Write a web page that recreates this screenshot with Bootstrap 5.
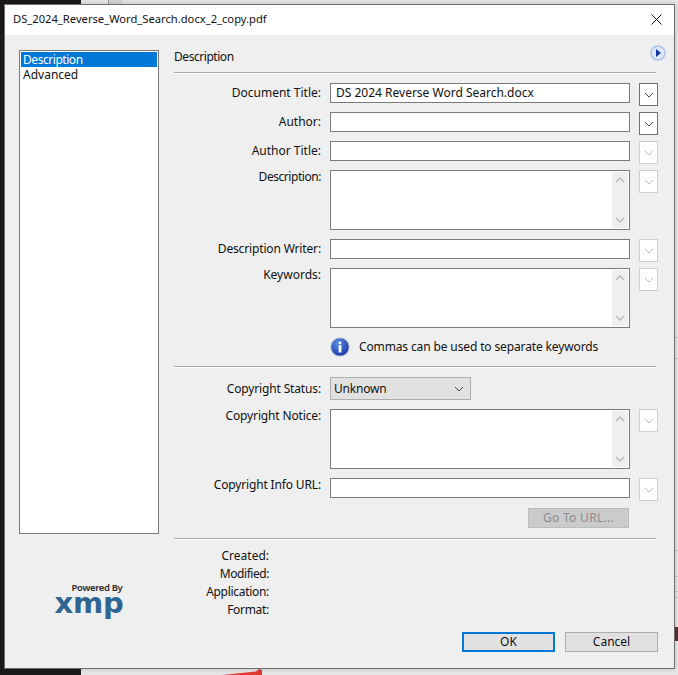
<!DOCTYPE html>
<html lang="en">
<head>
<meta charset="utf-8">
<title>Document Properties</title>
<link rel="stylesheet" href="https://cdn.jsdelivr.net/npm/bootstrap@5.3.0/dist/css/bootstrap.min.css">
<style>
html,body{height:100%;overflow:hidden}
body{background:#e6e6e6;font-family:"Noto Sans","Liberation Sans",sans-serif;font-size:12px;line-height:16px;color:#111;position:relative}
.desk-dark{position:absolute;left:0;top:0;bottom:0;width:81px;background:#1b1b1b}
.desk-band{position:absolute;left:108px;top:0;height:5px;width:14px;background:#d4d4d4;border-left:1px solid #a0a0a0}
.desk-tick{position:absolute;left:675px;width:3px;height:1px;background:#c4c4c4}
.desk-glyph{position:absolute;left:675px;top:627px;width:3px;height:14px;background:#5a3030}
.desk-mark{position:absolute;left:222px;top:668px;width:40px;height:7px;overflow:hidden}
.win{position:absolute;left:4px;top:4px;width:671px;height:665px;background:#efefef;border:1px solid #6e6e6e;box-shadow:0 0 5px rgba(0,0,0,.18)}
.win-title{height:30px;background:#fff;padding:0 8px 2px;font-size:11.2px}
.win-body{padding:15px 17px 0 14px;height:634px}
.side{width:140px;flex:none}
.side-list{height:484px;background:#fff;border:1px solid #7a7a7a;padding:1px}
.side-item{height:15px;line-height:15px;padding-left:2px}
.side-on{background:#0078d7;color:#fff}
.logo{margin-top:49px;text-align:center;color:#2b2b2b;line-height:1}
.logo-top{font-size:9.500px;font-weight:600;letter-spacing:-.35px;padding-left:16px;height:12px}
.logo-xmp{font-family:"DejaVu Sans",sans-serif;font-weight:700;font-size:29px;line-height:22px;color:#2f6590;letter-spacing:-.2px;height:24px;margin-top:-3px}
.pane{width:482px;margin-left:15px;flex:none}
.pane-head{height:22px;line-height:14px;position:relative}
.pane-go{position:absolute;right:-10px;top:-5px}
.rule{height:2px;background:linear-gradient(#a4a4a4 0 1px,#fff 1px 2px)}
.rows{padding-top:9px;display:flex;flex-direction:column;gap:9px}
.fld{display:flex;align-items:flex-start;width:484px;height:20px}
.fld-high{height:60px}
.fld-pick{height:23px}
.fld-lab{width:147px;text-align:right;flex:none;white-space:nowrap;padding-top:2px}
.fld-lab-up{padding-top:0;margin-top:-1px}
.fld-lab-pick{padding-top:4px}
.fld-box{width:300px;margin-left:9px;flex:none;height:20px;background:#fff;border:1px solid #7a7a7a;padding:0 5px;line-height:18px;white-space:nowrap;overflow:hidden}
.fld-tall{height:60px;position:relative;padding:0}
.bar{position:absolute;right:1px;top:1px;bottom:1px;width:16px;background:#efefef;display:flex;flex-direction:column;justify-content:space-between;align-items:center;padding:5px 0}
.drop{width:19px;height:23px;margin-left:9px;flex:none;background:#fff;border:1px solid #707070;display:flex;align-items:center;justify-content:center}
.drop-off{border-color:#cfcfcf}
.fld-note{height:20px;margin-left:156px;display:flex;align-items:center;gap:9px;letter-spacing:-.13px}
.picker{width:141px;height:23px;margin-left:9px;background:#e1e1e1;border:1px solid #adadad;padding:0 3px;display:flex;justify-content:space-between;align-items:center;letter-spacing:-.2px}
.picker-arrow{margin-right:3px}
.go{width:101px;height:20px;margin-left:354px;background:#cbcbcb;border:1px solid #bdbdbd;color:#8b8b8b;text-align:center;line-height:18px;margin-top:10px;letter-spacing:.3px}
.rule-a{margin-top:9px}
.rule-b{margin-top:10px}
.meta{padding-top:8px;display:flex;flex-direction:column;gap:2px}
.meta-row{width:95px;text-align:right}
.acts{margin-top:14px;gap:10px;padding-left:288px}
.act{width:93px;height:20px;background:#e1e1e1;border:1px solid #adadad;text-align:center;line-height:18px;color:#111;flex:none}
.act-main{border:2px solid #0078d7;line-height:16px}
.sp1{letter-spacing:-.15px}
.sp2{letter-spacing:-.3px}
.sp3{letter-spacing:-.45px}
</style>
</head>
<body>
<div class="desk-dark"></div>
<div class="desk-band"></div>
<div class="desk-tick" style="top:337px"></div>
<div class="desk-tick" style="top:358px"></div>
<div class="desk-tick" style="top:550px"></div>
<div class="desk-tick" style="top:576px"></div>
<div class="desk-tick" style="top:591px"></div>
<div class="desk-tick" style="top:597px"></div>
<div class="desk-glyph"></div>
<svg class="desk-mark" viewBox="0 0 40 7"><path d="M0 7 L34 3.500 L37 1 L40 2 L40 7z" fill="#e03a30"/></svg>
<div class="win">
  <div class="win-title d-flex align-items-center justify-content-between">
    <span>DS_2024_Reverse_Word_Search.docx_2_copy.pdf</span>
    <svg width="11" height="11" viewBox="0 0 11 11" class="me-1"><path d="M.5.5l10 10M10.500.5l-10 10" stroke="#111" stroke-width="1" fill="none"/></svg>
  </div>
  <div class="win-body d-flex">
    <div class="side">
      <div class="side-list">
        <div class="side-item side-on sp3">Description</div>
        <div class="side-item">Advanced</div>
      </div>
      <div class="logo">
        <div class="logo-top">Powered By</div>
        <div class="logo-xmp">xmp</div>
      </div>
    </div>
    <div class="pane">
      <div class="pane-head sp3">Description
        <svg class="pane-go" width="16" height="16" viewBox="0 0 16 16"><circle cx="8" cy="8" r="7" fill="#dfe8f8" stroke="#a9c0ea" stroke-width="1.500"/><path d="M6 4l5 4-5 4z" fill="#10379b"/></svg>
      </div>
      <div class="rule"></div>
      <div class="rows">
        <div class="fld"><div class="fld-lab">Document Title:</div><div class="fld-box">DS 2024 Reverse Word Search.docx</div><div class="drop"><svg width="10" height="6" viewBox="0 0 10 6"><path d="M1 1l4 4 4-4" stroke="#444" fill="none"/></svg></div></div>
        <div class="fld"><div class="fld-lab">Author:</div><div class="fld-box"></div><div class="drop"><svg width="10" height="6" viewBox="0 0 10 6"><path d="M1 1l4 4 4-4" stroke="#444" fill="none"/></svg></div></div>
        <div class="fld"><div class="fld-lab">Author Title:</div><div class="fld-box"></div><div class="drop drop-off"><svg width="10" height="6" viewBox="0 0 10 6"><path d="M1 1l4 4 4-4" stroke="#bbb" fill="none"/></svg></div></div>
        <div class="fld fld-high"><div class="fld-lab fld-lab-up sp3">Description:</div><div class="fld-box fld-tall"><div class="bar"><svg width="10" height="6" viewBox="0 0 10 6"><path d="M1 5l4-4 4 4" stroke="#bbb" stroke-width="1.500" fill="none"/></svg><svg width="10" height="6" viewBox="0 0 10 6"><path d="M1 1l4 4 4-4" stroke="#bbb" stroke-width="1.500" fill="none"/></svg></div></div><div class="drop drop-off"><svg width="10" height="6" viewBox="0 0 10 6"><path d="M1 1l4 4 4-4" stroke="#bbb" fill="none"/></svg></div></div>
        <div class="fld"><div class="fld-lab sp1">Description Writer:</div><div class="fld-box"></div><div class="drop drop-off"><svg width="10" height="6" viewBox="0 0 10 6"><path d="M1 1l4 4 4-4" stroke="#bbb" fill="none"/></svg></div></div>
        <div class="fld fld-high"><div class="fld-lab fld-lab-up">Keywords:</div><div class="fld-box fld-tall"><div class="bar"><svg width="10" height="6" viewBox="0 0 10 6"><path d="M1 5l4-4 4 4" stroke="#bbb" stroke-width="1.500" fill="none"/></svg><svg width="10" height="6" viewBox="0 0 10 6"><path d="M1 1l4 4 4-4" stroke="#bbb" stroke-width="1.500" fill="none"/></svg></div></div><div class="drop drop-off"><svg width="10" height="6" viewBox="0 0 10 6"><path d="M1 1l4 4 4-4" stroke="#bbb" fill="none"/></svg></div></div>
        <div class="fld-note">
          <svg width="20" height="20" viewBox="0 0 22 22"><defs><radialGradient id="ig" cx=".4" cy=".3" r=".8"><stop offset="0" stop-color="#5f8fe6"/><stop offset="1" stop-color="#0f2f9c"/></radialGradient></defs><circle cx="11" cy="11" r="10" fill="url(#ig)" stroke="#9aa7c4"/><circle cx="11" cy="6.500" r="1.500" fill="#fff"/><rect x="9.500" y="9" width="3" height="8" fill="#fff"/></svg>
          <span>Commas can be used to separate keywords</span>
        </div>
      </div>
      <div class="rule rule-a"></div>
      <div class="rows">
        <div class="fld fld-pick"><div class="fld-lab fld-lab-pick sp1">Copyright Status:</div><div class="picker"><span>Unknown</span><svg class="picker-arrow" width="10" height="6" viewBox="0 0 10 6"><path d="M1 1l4 4 4-4" stroke="#444" fill="none"/></svg></div></div>
        <div class="fld fld-high"><div class="fld-lab fld-lab-up sp1">Copyright Notice:</div><div class="fld-box fld-tall"><div class="bar"><svg width="10" height="6" viewBox="0 0 10 6"><path d="M1 5l4-4 4 4" stroke="#bbb" stroke-width="1.500" fill="none"/></svg><svg width="10" height="6" viewBox="0 0 10 6"><path d="M1 1l4 4 4-4" stroke="#bbb" stroke-width="1.500" fill="none"/></svg></div></div><div class="drop drop-off"><svg width="10" height="6" viewBox="0 0 10 6"><path d="M1 1l4 4 4-4" stroke="#bbb" fill="none"/></svg></div></div>
        <div class="fld"><div class="fld-lab fld-lab-up sp1">Copyright Info URL:</div><div class="fld-box"></div><div class="drop drop-off"><svg width="10" height="6" viewBox="0 0 10 6"><path d="M1 1l4 4 4-4" stroke="#bbb" fill="none"/></svg></div></div>
      </div>
      <div class="go">Go To URL...</div>
      <div class="rule rule-b"></div>
      <div class="meta">
        <div class="meta-row">Created:</div>
        <div class="meta-row sp3">Modified:</div>
        <div class="meta-row sp2">Application:</div>
        <div class="meta-row sp2">Format:</div>
      </div>
      <div class="acts d-flex">
        <div class="act act-main">OK</div>
        <div class="act">Cancel</div>
      </div>
    </div>
  </div>
</div>
</body>
</html>
